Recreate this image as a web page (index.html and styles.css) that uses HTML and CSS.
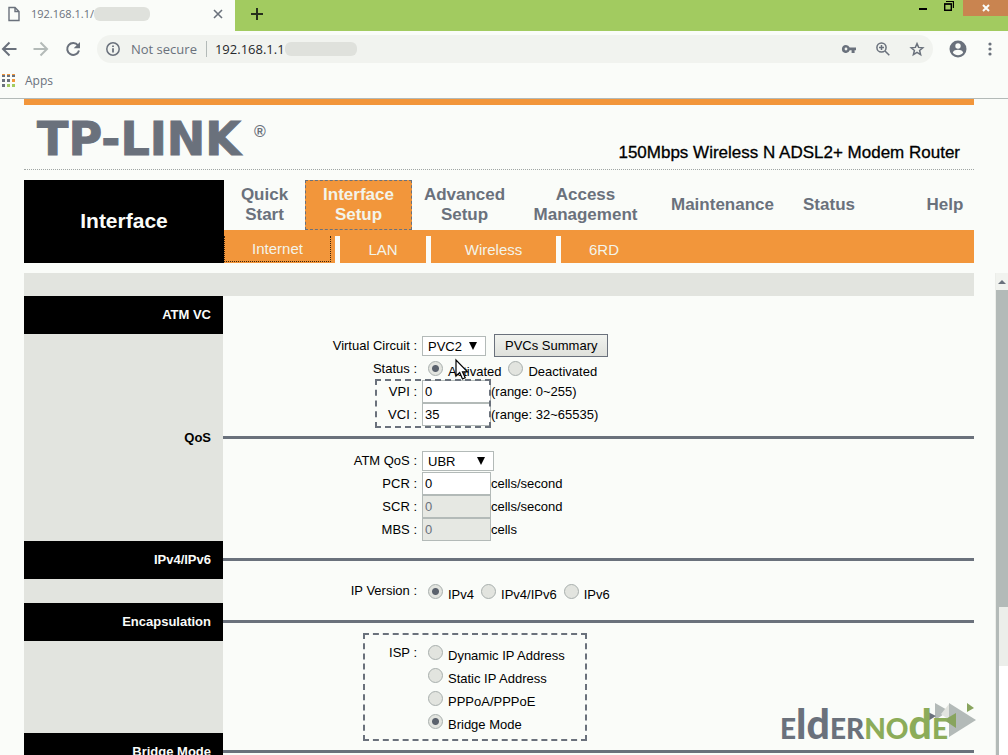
FILE: index.html
```html
<!DOCTYPE html>
<html lang="en">
<head>
<meta charset="utf-8">
<title>192.168.1.1</title>
<link rel="stylesheet" href="styles.css">
</head>
<body>
<header class="chrome">
  <div class="tabstrip">
    <div class="tab">
      <svg class="doc" width="12" height="16" viewBox="0 0 12 16"><path d="M1 1.5h6l4 4v9H1zM7 1.5v4h4" fill="none" stroke="#6a717c" stroke-width="1.4"/></svg>
      <span>192.168.1.1/</span><span class="smudge smudge-tab"></span>
      <button class="icon-btn tab-close" aria-label="Close tab"><svg width="10" height="10" viewBox="0 0 10 10"><path d="M1 1l8 8M9 1l-8 8" stroke="#6a717c" stroke-width="1.6"/></svg></button>
    </div>
    <button class="icon-btn new-tab" aria-label="New tab"><svg width="12" height="12" viewBox="0 0 12 12"><path d="M6 0v12M0 6h12" stroke="#26301c" stroke-width="2"/></svg></button>
    <div class="window-buttons">
      <button class="icon-btn" aria-label="Minimize"><svg width="8" height="12" viewBox="0 0 8 12"><path d="M0 9h8" stroke="#000" stroke-width="2"/></svg></button>
      <button class="icon-btn" aria-label="Restore"><svg width="10" height="12" viewBox="0 0 10 12"><path d="M.7 4h6.6v6.300H.7z" fill="none" stroke="#000" stroke-width="1.400"/><path d="M0 4h8M2 1.500h7.400V8" fill="none" stroke="#000" stroke-width="1.200"/></svg></button>
      <button class="icon-btn close" aria-label="Close"><svg width="8" height="8" viewBox="0 0 8 8"><path d="M1 1l6 6M7 1L1 7" stroke="#fafcf9" stroke-width="2"/></svg></button>
    </div>
  </div>
  <div class="toolbar">
    <button class="icon-btn" aria-label="Back"><svg width="16" height="16" viewBox="0 0 16 16"><path d="M15.500 8H3M8.500 1.500L2 8l6.500 6.500" fill="none" stroke="#6a717c" stroke-width="2"/></svg></button>
    <button class="icon-btn" aria-label="Forward"><svg width="16" height="16" viewBox="0 0 16 16"><path d="M.5 8H13M7.500 1.500L14 8l-6.500 6.500" fill="none" stroke="#b3bab8" stroke-width="2"/></svg></button>
    <button class="icon-btn" aria-label="Reload"><svg width="16" height="16" viewBox="0 0 16 16"><path d="M13 4.300A6 6 0 1 0 14 9.500" fill="none" stroke="#6a717c" stroke-width="2"/><path d="M15 1v6.300H8.700z" fill="#6a717c"/></svg></button>
    <div class="omnibox">
      <svg width="14" height="14" viewBox="0 0 14 14"><circle cx="7" cy="7" r="6.200" fill="none" stroke="#6a717c" stroke-width="1.500"/><path d="M7 6.300V10.500M7 3.500v1.600" stroke="#6a717c" stroke-width="1.800"/></svg>
      <label class="secure" for="url">Not secure</label>
      <input id="url" class="url" type="text" value="192.168.1.1"><span class="smudge"></span>
      <div class="omni-actions">
        <button class="icon-btn" aria-label="Saved password"><svg width="14" height="10" viewBox="0 0 14 10"><path fill-rule="evenodd" d="M4 1a4 4 0 1 0 3.700 5.300H9.600V9h3V6.300H14V3.500H7.700A4 4 0 0 0 4 1zM4 3.600a1.400 1.400 0 1 1 0 2.800 1.400 1.400 0 0 1 0-2.800z" fill="#6a717c"/></svg></button>
        <button class="icon-btn" aria-label="Zoom"><svg width="14" height="14" viewBox="0 0 14 14"><circle cx="5.500" cy="5.500" r="4.600" fill="none" stroke="#6a717c" stroke-width="1.500"/><path d="M9 9l4.300 4.300M3 5.500h5M5.500 3v5" stroke="#6a717c" stroke-width="1.500"/></svg></button>
        <button class="icon-btn" aria-label="Bookmark"><svg width="14" height="14" viewBox="0 0 14 14"><path d="M7 1.600l1.600 3.800 4.200.4-3.200 2.700 1 4.100L7 10.400l-3.600 2.200 1-4.100L1.200 5.800l4.200-.4z" fill="none" stroke="#6a717c" stroke-width="1.500"/></svg></button>
      </div>
    </div>
    <button class="icon-btn profile" aria-label="Profile"><svg width="18" height="18" viewBox="0 0 18 18"><circle cx="9" cy="9" r="8.500" fill="#6a717c"/><circle cx="9" cy="6" r="2.700" fill="#fafcf9"/><path d="M3.800 12.400c1-2 3-2.600 5.200-2.600s4.200.6 5.200 2.600C13 14.200 11 15.200 9 15.200s-4-1-5.200-2.800z" fill="#fafcf9"/></svg></button>
    <button class="icon-btn" aria-label="Menu"><svg width="4" height="14" viewBox="0 0 4 14"><circle cx="2" cy="2" r="1.600" fill="#6a717c"/><circle cx="2" cy="7" r="1.600" fill="#6a717c"/><circle cx="2" cy="12" r="1.600" fill="#6a717c"/></svg></button>
  </div>
  <nav class="bookmarks">
    <a class="apps" href="#"><svg width="14" height="14" viewBox="0 0 14 14"><g fill="#6a717c"><path d="M0 5h3v3H0zM5 5h3v3H5zM0 10h3v3H0zM0 1h3v2H0zM5 1h3v2H5zM10 1h3v2h-3z"/></g><path d="M0 0h3v1H0zM5 0h3v1H5zM10 0h3v1h-3zM10 5h3v3h-3z" fill="#f2963b"/><path d="M5 10h3v3H5zM10 10h3v3h-3z" fill="#a2cb60"/></svg>Apps</a>
  </nav>
</header>

<div class="banner">
  <div class="brand">
    <svg class="logo" width="236" height="48" viewBox="0 0 236 48" role="img" aria-label="TP-LINK"><text class="logo-text" x="1" y="38">TP-LINK</text><text class="logo-reg" x="218" y="20">®</text></svg>
    <p class="product">150Mbps Wireless N ADSL2+ Modem Router</p>
  </div>
  <div class="menu">
    <h1 class="menu-title">Interface</h1>
    <div class="menu-body">
      <nav class="main-nav">
        <a class="nav-quick" href="#">Quick<br>Start</a>
        <a class="nav-interface active" href="#">Interface<br>Setup</a>
        <a class="nav-advanced" href="#">Advanced<br>Setup</a>
        <a class="nav-wide" href="#">Access<br>Management</a>
        <a class="nav-wide" href="#">Maintenance</a>
        <a class="nav-status" href="#">Status</a>
        <a class="nav-help" href="#">Help</a>
      </nav>
      <nav class="sub-nav">
        <a class="sub-internet" href="#"><span>Internet</span></a>
        <a class="sub-small" href="#">LAN</a>
        <a class="sub-wireless" href="#">Wireless</a>
        <a class="sub-last" href="#">6RD</a>
      </nav>
    </div>
  </div>
</div>

<div class="frame">
  <main class="settings">
    <div class="strip"></div>
    <section class="section">
      <h2 class="tag dark">ATM VC</h2>
      <form class="fields first">
        <div class="row"><label class="name" for="vc">Virtual Circuit :</label><select id="vc" class="pick pick-vc"><option>PVC2</option></select><button class="summary" type="button">PVCs Summary</button></div>
        <div class="row"><span class="name">Status :</span><label class="choice"><input type="radio" name="status" checked><span>Activated</span></label><label class="choice"><input type="radio" name="status"><span>Deactivated</span></label>
          <svg class="cursor" width="14" height="22" viewBox="0 0 14 22"><path d="M1 1v16l3.700-3.500L7.500 20l2.700-1.200-2.700-6h5z" fill="#fff" stroke="#000" stroke-width="1.200"/></svg></div>
        <div class="marked">
          <div class="row"><label class="name" for="vpi">VPI :</label><input id="vpi" class="num" type="text" value="0">(range: 0~255)</div>
          <div class="row"><label class="name" for="vci">VCI :</label><input id="vci" class="num" type="text" value="35">(range: 32~65535)</div>
          <div class="dash dash-vpi"></div>
        </div>
      </form>
    </section>
    <section class="section">
      <h2 class="tag plain">QoS</h2>
      <div class="rule"></div>
      <form class="fields">
        <div class="row"><label class="name" for="qos">ATM QoS :</label><select id="qos" class="pick pick-qos"><option>UBR</option></select></div>
        <div class="row"><label class="name" for="pcr">PCR :</label><input id="pcr" class="num" type="text" value="0">cells/second</div>
        <div class="row"><label class="name" for="scr">SCR :</label><input id="scr" class="num" type="text" value="0" disabled>cells/second</div>
        <div class="row"><label class="name" for="mbs">MBS :</label><input id="mbs" class="num" type="text" value="0" disabled>cells</div>
      </form>
    </section>
    <section class="section">
      <h2 class="tag dark">IPv4/IPv6</h2>
      <div class="rule"></div>
      <form class="fields">
        <div class="row tall"><span class="name">IP Version :</span><label class="choice"><input type="radio" name="ip" checked><span>IPv4</span></label><label class="choice"><input type="radio" name="ip"><span>IPv4/IPv6</span></label><label class="choice"><input type="radio" name="ip"><span>IPv6</span></label></div>
      </form>
    </section>
    <section class="section">
      <h2 class="tag dark">Encapsulation</h2>
      <div class="rule"></div>
      <form class="fields marked">
        <div class="row"><span class="name">ISP :</span><label class="choice"><input type="radio" name="isp"><span>Dynamic IP Address</span></label></div>
        <div class="row"><span class="name"></span><label class="choice"><input type="radio" name="isp"><span>Static IP Address</span></label></div>
        <div class="row"><span class="name"></span><label class="choice"><input type="radio" name="isp"><span>PPPoA/PPPoE</span></label></div>
        <div class="row"><span class="name"></span><label class="choice"><input type="radio" name="isp" checked><span>Bridge Mode</span></label></div>
        <div class="dash dash-isp"></div>
      </form>
    </section>
    <section class="section">
      <h2 class="tag dark">Bridge Mode</h2>
      <div class="rule"></div>
    </section>
  </main>
  <div class="scrollbar">
    <button class="icon-btn scroll-up" aria-label="Scroll up"><svg width="8" height="5" viewBox="0 0 8 5"><path d="M0 5l4-4 4 4z" fill="#6a717c"/></svg></button>
    <div class="thumb"></div>
    <div class="track"></div>
  </div>
  <svg class="watermark" width="198" height="52" viewBox="0 0 198 52" role="img" aria-label="Eldernode">
    <path d="M171 9l27 17-27 17z" fill="#b3bab8"/><path d="M157 9l14 8-14 9z" fill="#b3bab8"/><path d="M163 20l8-10v16z" fill="#e2e4df"/>
    <path d="M150 18l8 4-8 5z" fill="#6a717c"/><path d="M178 19v15l-12-8z" fill="#88a45e"/><path d="M189 9l7 5-7 4z" fill="#88a45e"/>
    <text class="wm" x="2" y="45"><tspan class="wm-low">E</tspan><tspan>ld</tspan><tspan class="wm-low">ER</tspan><tspan class="wm-green wm-low">NO</tspan><tspan class="wm-green">d</tspan><tspan class="wm-green wm-low">E</tspan></text>
  </svg>
</div>
</body>
</html>
```
FILE: styles.css
```css
* { box-sizing: border-box; }

body {
  margin: 0;
  height: 100vh;
  display: flex;
  flex-direction: column;
  overflow: hidden;
  background: #fafcf9;
  color: #000;
  font: 13px/20px "Liberation Sans", Arial, sans-serif;
}

a { text-decoration: none; color: inherit; }
h1, h2, p { margin: 0; }
svg { display: block; flex: none; overflow: visible; }

.icon-btn {
  display: flex;
  align-items: center;
  justify-content: center;
  flex: none;
  padding: 0;
  border: 0;
  background: none;
}

/* Browser chrome */
.chrome {
  flex: none;
  border-bottom: 1px solid #b3bab8;
  font-family: "Open Sans", "Noto Sans", sans-serif;
  color: #6a717c;
}
.tabstrip {
  display: flex;
  height: 31px;
  background: linear-gradient(to right, #fafcf9 235px, transparent 235px) #a2cb60;
}
.tab {
  display: flex;
  align-items: center;
  width: 235px;
  height: 31px;
  padding: 0 12px 4px 8px;
  background: #fafcf9;
  font-size: 11px;
}
.tab .doc { margin-right: 11px; }
.tab-close { margin-left: auto; }
.new-tab { width: 44px; height: 28px; margin-right: auto; }
.window-buttons { display: flex; align-items: flex-start; gap: 17px; }
.window-buttons .close {
  width: 45px;
  height: 16px;
  margin-left: -8px;
  background: #c98450;
}
.smudge {
  width: 72px;
  height: 14px;
  border-radius: 6px;
  background: #dfe1dc;
}
.smudge-tab { width: 56px; }

.toolbar {
  display: flex;
  align-items: center;
  gap: 16px;
  height: 36px;
  padding: 0 16px 0 1px;
}
.omnibox {
  display: flex;
  align-items: center;
  flex: 1;
  height: 28px;
  padding: 0 9px;
  border-radius: 14px;
  background: #f1f3ef;
  font-size: 13px;
}
.secure { margin-left: 11px; padding-right: 9px; border-right: 1px solid #b3bab8; line-height: 16px; }
.url {
  width: 78px;
  padding: 0 0 0 8px;
  border: 0;
  background: none;
  color: #26282c;
  font: inherit;
}
.omni-actions { display: flex; align-items: center; gap: 20px; margin-left: auto; }
.profile { margin-right: 5px; }

.bookmarks { height: 31px; padding: 4px 2px; font-size: 12px; }
.apps { display: inline-flex; align-items: center; gap: 9px; }

/* Router banner */
.banner { flex: none; padding-left: 24px; margin-right: 34px; }
.brand {
  display: flex;
  justify-content: space-between;
  align-items: flex-end;
  height: 71px;
  padding: 0 14px 4px 12px;
  border-top: 6px solid #f2963b;
  border-bottom: 1px dotted #a0a6a4;
}
.logo-text { font: bold 46px "DejaVu Sans", sans-serif; fill: #6a717c; stroke: #6a717c; stroke-width: 1px; }
.logo-reg { font: bold 16px "Liberation Sans", sans-serif; fill: #6a717c; }
.product { font-size: 17px; line-height: 24px; -webkit-text-stroke: 0.3px #000; }

.menu { display: flex; margin-top: 10px; }
.menu-title {
  display: grid;
  place-items: center;
  width: 200px;
  padding-bottom: 2px;
  background: #000;
  color: #fafcf9;
  font-size: 21px;
  line-height: 24px;
}
.menu-body { flex: 1; }
.main-nav {
  display: flex;
  height: 50px;
  color: #6a717c;
  font-size: 17px;
  font-weight: bold;
  text-align: center;
}
.main-nav a { display: grid; place-content: center; }
.nav-quick { width: 81px; }
.nav-interface { width: 107px; }
.main-nav .active { background: #f2963b; color: #f3f4ea; border: 1px dashed #6a717c; }
.nav-advanced { width: 105px; }
.nav-wide { width: 137px; }
.nav-status { width: 76px; }
.nav-help { width: 58px; margin-left: auto; }
.sub-nav {
  display: flex;
  align-items: flex-end;
  height: 33px;
  background: #f2963b;
  color: #f3f4ea;
  font-size: 15px;
  text-align: center;
}
.sub-nav a { height: 27px; line-height: 27px; border-right: 5px solid #fafcf9; }
.sub-nav .sub-last { width: 86px; border-right: 0; }
.sub-internet { width: 116px; padding-right: 4px; }
.sub-internet span { display: block; height: 26px; border: 1px dotted #3a2510; border-top: 0; line-height: 26px; }
.sub-small { width: 91px; }
.sub-wireless { width: 130px; }

/* Settings frame */
.frame {
  position: relative;
  display: flex;
  flex: 1;
  min-height: 0;
  margin-top: 10px;
  overflow: hidden;
}
.settings { flex: 1; padding-left: 24px; margin-right: 21px; }
.strip { height: 23px; background: #e2e4df; }
.section {
  display: grid;
  grid-template-columns: 199px 1fr;
  background: linear-gradient(to right, #e2e4df 199px, transparent 199px);
}
.tag {
  padding-right: 12px;
  text-align: right;
  font-size: 13px;
  line-height: 38px;
}
.dark { background: #000; color: #fafcf9; }
.plain { line-height: 23px; }
.rule { align-self: center; height: 3px; margin-bottom: 1px; background: #6a717c; }
.fields { grid-column: 2; }
.first { padding-top: 38px; grid-row: 1 / span 2; }
.row { display: flex; align-items: center; height: 23px; position: relative; }
.tall { height: 24px; }
.name { width: 194px; margin-right: 5px; text-align: right; }
.pick, .num {
  height: 23px;
  border: 1px solid #b3bab8;
  background: #fff;
  color: #000;
  font: inherit;
}
.pick {
  height: 20px;
  padding: 0 5px 2px;
  appearance: none;
  background: #fff url("data:image/svg+xml,%3Csvg xmlns='http://www.w3.org/2000/svg' width='8' height='8'%3E%3Cpath d='M0 0h8L4 8z'/%3E%3C/svg%3E") no-repeat right 8px center;
}
.pick-vc { width: 64px; }
.pick-qos { width: 72px; }
.num { width: 69px; padding: 0 2px; }
.num:disabled { background: #e6e8e3; color: #6a717c; }
.summary {
  height: 23px;
  margin-left: 8px;
  padding: 0 10px;
  border: 1px solid #6a717c;
  background: linear-gradient(#f1f3ef, #dfe1dc);
  color: #000;
  font: inherit;
}
.choice { display: flex; align-items: center; margin-right: 7px; }
.choice input {
  appearance: none;
  width: 15px;
  height: 15px;
  margin: 0 5px 0 6px;
  border: 1px solid #a8afad;
  border-radius: 50%;
  background: #e2e4df;
}
.choice + .choice input { margin-left: 0; }
.choice input:checked { background: radial-gradient(circle, #5a616c 3px, #e2e4df 4px); }
.choice span { padding-top: 7px; }
.marked { position: relative; }
.dash {
  position: absolute;
  border: 2px dashed #6a717c;
  pointer-events: none;
}
.dash-vpi { left: 152px; top: -1px; bottom: -2px; width: 116px; }
.dash-isp { left: 140px; top: -8px; bottom: -8px; width: 224px; }
.cursor { position: absolute; left: 232px; top: 2px; z-index: 1; }

.scrollbar { display: flex; flex-direction: column; width: 13px; border-left: 1px solid #eceeea; }
.scroll-up { height: 17px; background: #f1f3ef; }
.thumb { flex: 317; background: #b3bab8; }
.track {
  flex: 148;
  border-left: 3px solid #b3bab8;
  background: linear-gradient(#eceeea 40%, #fff 40%);
}

.watermark { position: absolute; right: 32px; bottom: 9px; }
.wm { font: 900 41px Lato, sans-serif; fill: #6a717c; }
.wm-low { font-size: 28px; }
.wm-green { fill: #8cac59; }
```
